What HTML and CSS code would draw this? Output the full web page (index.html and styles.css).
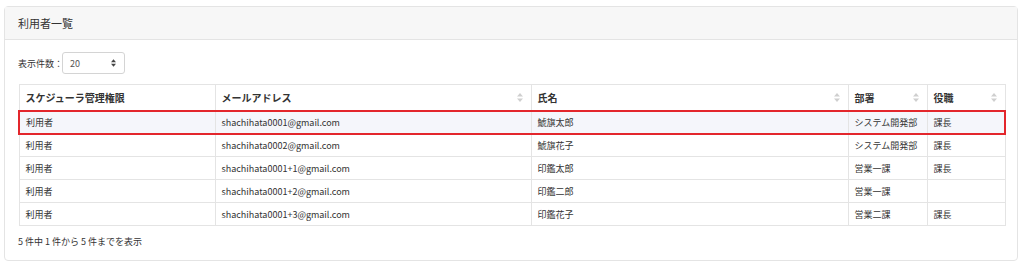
FILE: index.html
```html
<!DOCTYPE html>
<html lang="ja">
<head>
  <meta charset="UTF-8">
  <title>利用者一覧</title>
  <link rel="stylesheet" href="styles.css">
</head>
<body>
  <div class="card">
    <div class="card-header">利用者一覧</div>
    <div class="card-body">
      <div class="length">
        <label>表示件数：</label>
        <div class="select">
          <span>20</span>
          <svg class="caret" width="5" height="8" viewBox="0 0 6 9"><path d="M3 0 L6 3.5 H0 Z M3 9 L6 5.5 H0 Z" fill="#444"/></svg>
        </div>
      </div>

      <table class="users">
        <colgroup>
          <col style="width:196px">
          <col style="width:316px">
          <col style="width:317px">
          <col style="width:79px">
          <col>
        </colgroup>
        <thead>
          <tr>
            <th>スケジューラ管理権限</th>
            <th class="sort">メールアドレス</th>
            <th class="sort">氏名</th>
            <th class="sort">部署</th>
            <th class="sort">役職</th>
          </tr>
        </thead>
        <tbody>
          <tr class="selected">
            <td>利用者</td><td>shachihata0001@gmail.com</td><td>鯱旗太郎</td><td>システム開発部</td><td>課長</td>
          </tr>
          <tr>
            <td>利用者</td><td>shachihata0002@gmail.com</td><td>鯱旗花子</td><td>システム開発部</td><td>課長</td>
          </tr>
          <tr>
            <td>利用者</td><td>shachihata0001+1@gmail.com</td><td>印鑑太郎</td><td>営業一課</td><td>課長</td>
          </tr>
          <tr>
            <td>利用者</td><td>shachihata0001+2@gmail.com</td><td>印鑑二郎</td><td>営業一課</td><td></td>
          </tr>
          <tr>
            <td>利用者</td><td>shachihata0001+3@gmail.com</td><td>印鑑花子</td><td>営業二課</td><td>課長</td>
          </tr>
        </tbody>
      </table>

      <div class="info">5 件中 1 件から 5 件までを表示</div>
    </div>
  </div>
</body>
</html>
```

FILE: styles.css
```css
* {
  box-sizing: border-box;
  margin: 0;
  padding: 0;
}

body {
  font-family: "Noto Sans CJK JP", "Noto Sans", sans-serif;
  color: #333;
  background: #fff;
  padding: 6px 6px 0 4px;
}

.card {
  border: 1px solid #e4e4e4;
  border-radius: 4px;
  width: 1014px;
  height: 255px;
}

.card-header {
  background: #f7f7f7;
  border-bottom: 1px solid #e4e4e4;
  height: 33px;
  padding: 0 13px;
  font-size: 11px;
  line-height: 33px;
}

.card-body {
  padding: 12px 12px 0 13px;
}

.length {
  display: flex;
  align-items: center;
  font-size: 9px;
  margin-bottom: 10px;
}

.select {
  display: flex;
  align-items: center;
  justify-content: space-between;
  width: 63px;
  height: 22px;
  border: 1px solid #d4d4d4;
  border-radius: 3px;
  padding: 0 8px 0 7px;
  margin-left: -1px;
  font-size: 9px;
  color: #555;
}

.users {
  width: 988px;
  border-collapse: collapse;
  table-layout: fixed;
  font-size: 9px;
}

.users th,
.users td {
  border: 1px solid #e4e4e4;
  text-align: left;
  padding: 0 6px;
  white-space: nowrap;
  overflow: hidden;
}

.users th {
  height: 26px;
  font-size: 10px;
  font-weight: bold;
  border-bottom: 0;
}

.users td {
  height: 23px;
}

.users th.sort {
  background-image: url("data:image/svg+xml,%3Csvg xmlns='http://www.w3.org/2000/svg' width='6' height='9'%3E%3Cpath d='M3 0 L6 3.5 H0 Z M3 9 L6 5.5 H0 Z' fill='%23cfcfcf'/%3E%3C/svg%3E");
  background-repeat: no-repeat;
  background-position: right 8px center;
}

.users tr.selected td {
  background: #f5f6fb;
  border-top: 2px solid #e3262c;
  border-bottom: 2px solid #e3262c;
}

.users tr.selected td:first-child {
  border-left: 2px solid #e3262c;
}

.users tr.selected td:last-child {
  border-right: 2px solid #e3262c;
}

.info {
  font-size: 9px;
  margin-top: 9px;
}
```
